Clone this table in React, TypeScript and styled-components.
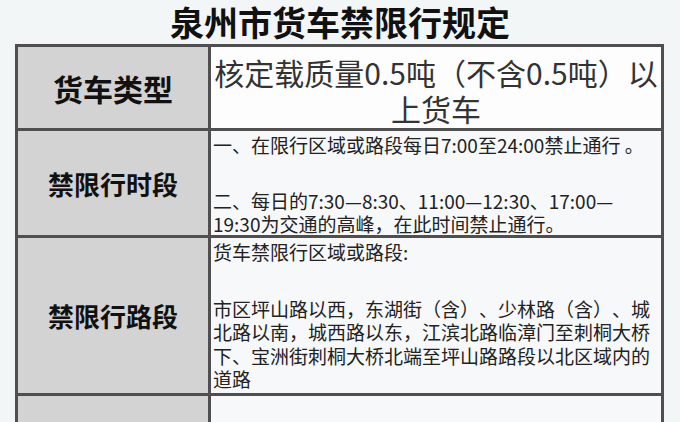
import React from 'react';
import styled, { createGlobalStyle } from 'styled-components';

const GlobalStyle = createGlobalStyle`
  body {
    margin: 0;
    background: #f3f6f7;
    font-family: 'Noto Sans CJK SC', 'Noto Sans', sans-serif;
    color: #222;
    text-spacing-trim: space-all;
  }
`;

const Page = styled.div`
  width: 680px;
  height: 422px;
  overflow: hidden;
`;

const Title = styled.h1`
  margin: 0;
  height: 44px;
  line-height: 44px;
  font-size: 34px;
  font-weight: bold;
  text-align: center;
  color: #111;
`;

const Table = styled.div`
  display: grid;
  grid-template-columns: 190px 450px;
  grid-template-rows: 81px 104px 155px 60px;
  gap: 3px;
  width: 643px;
  margin-left: 15px;
  border: 3px solid #4f4f4f;
  background: #4f4f4f;
`;

const Label = styled.div<{ $size: number }>`
  display: flex;
  align-items: center;
  justify-content: center;
  background: #d3d3d3;
  font-size: ${(p) => p.$size}px;
  font-weight: bold;
  color: #111;
`;

const Cell = styled.div<{ $bg?: string }>`
  background: ${(p) => p.$bg || '#f6f8f9'};
  padding: 2px 2px 0;
  font-size: 19px;
  line-height: 23.5px;
`;

const Heading = styled.div`
  background: #fdfdfd;
  padding-top: 7px;
  font-size: 30px;
  line-height: 36px;
  text-align: center;
  white-space: nowrap;
  color: #333;
`;

const Paragraph = styled.p<{ $gap?: number }>`
  margin: ${(p) => p.$gap || 0}px 0 0;
`;

const App: React.FC = () => {
  return (
    <>
      <GlobalStyle />
      <Page>
        <Title>泉州市货车禁限行规定</Title>
        <Table>
          <Label $size={30}>货车类型</Label>
          <Heading>
            核定载质量0.5吨（不含0.5吨）以
            <br />
            上货车
          </Heading>

          <Label $size={26}>禁限行时段</Label>
          <Cell>
            <Paragraph>一、在限行区域或路段每日7:00至24:00禁止通行 。</Paragraph>
            <Paragraph $gap={32}>
              二、每日的7:30—8:30、11:00—12:30、17:00—19:30为交通的高峰，在此时间禁止通行。
            </Paragraph>
          </Cell>

          <Label $size={26}>禁限行路段</Label>
          <Cell>
            <Paragraph>货车禁限行区域或路段:</Paragraph>
            <Paragraph $gap={33}>
              市区坪山路以西，东湖街（含）、少林路（含）、城北路以南，城西路以东，江滨北路临漳门至刺桐大桥下、宝洲街刺桐大桥北端至坪山路路段以北区域内的道路
            </Paragraph>
          </Cell>

          <Label $size={26} />
          <Cell />
        </Table>
      </Page>
    </>
  );
};

export default App;
